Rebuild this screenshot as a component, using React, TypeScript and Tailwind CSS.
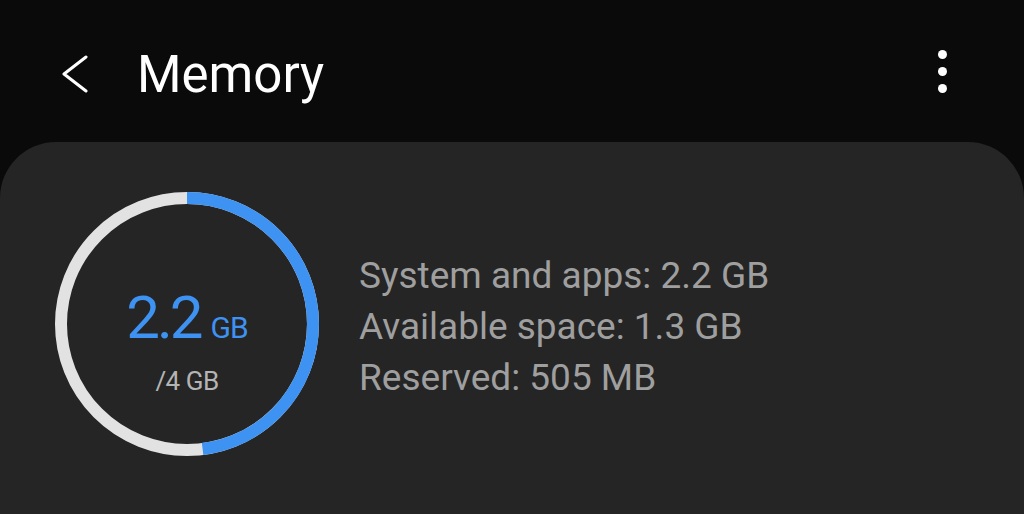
const RING_SIZE = 264;
const STROKE = 12;
const USED_FRACTION = 0.48;

function MemoryRing() {
  const r = (RING_SIZE - STROKE) / 2;
  const c = 2 * Math.PI * r;
  const used = c * USED_FRACTION;

  return (
    <div className="relative w-[264px] h-[264px] shrink-0">
      <svg width={RING_SIZE} height={RING_SIZE} viewBox={`0 0 ${RING_SIZE} ${RING_SIZE}`} className="-rotate-90">
        <circle cx={RING_SIZE / 2} cy={RING_SIZE / 2} r={r} fill="none" stroke="#e2e2e2" strokeWidth={STROKE} />
        <circle
          cx={RING_SIZE / 2}
          cy={RING_SIZE / 2}
          r={r}
          fill="none"
          stroke="#3e92f2"
          strokeWidth={STROKE}
          strokeDasharray={`${used} ${c}`}
        />
      </svg>
      <div className="absolute inset-0 flex flex-col items-center justify-center pt-[34px]">
        <div className="flex items-baseline text-[#3e92f2]">
          <span className="text-[60px] leading-none tracking-[-3px]">2.2</span>
          <span className="ml-[10px] text-[30px] leading-none tracking-[-1px]">GB</span>
        </div>
        <div className="mt-[20px] text-[26px] leading-none text-[#b4b4b4] tracking-[-0.5px]">/4 GB</div>
      </div>
    </div>
  );
}

export default function App() {
  return (
    <div className="w-[1024px] h-[514px] bg-[#0a0a0a] overflow-hidden flex flex-col font-['Roboto','Noto_Sans',sans-serif]">
      <header className="h-[142px] shrink-0 flex items-center pl-[61px] pr-[77px] pt-[6px]">
        <svg width="28" height="38" viewBox="0 0 28 38" className="shrink-0">
          <polyline points="25,2 3,19 25,36" fill="none" stroke="#ffffff" strokeWidth="3" strokeLinecap="round" strokeLinejoin="round" />
        </svg>
        <h1 className="ml-[48px] text-[51px] text-white leading-none">Memory</h1>
        <div className="ml-auto flex flex-col items-center gap-[8px] -mt-[6px]">
          <span className="block w-[9px] h-[9px] rounded-full bg-white" />
          <span className="block w-[9px] h-[9px] rounded-full bg-white" />
          <span className="block w-[9px] h-[9px] rounded-full bg-white" />
        </div>
      </header>
      <main className="flex-1 bg-[#252525] rounded-t-[56px] pt-[50px] pl-[55px]">
        <div className="flex items-center gap-[40px]">
          <MemoryRing />
          <div className="flex flex-col text-[37px] leading-[51px] text-[#9f9f9f] pt-[4px]">
            <span>System and apps: 2.2 GB</span>
            <span>Available space: 1.3 GB</span>
            <span>Reserved: 505 MB</span>
          </div>
        </div>
      </main>
    </div>
  );
}
